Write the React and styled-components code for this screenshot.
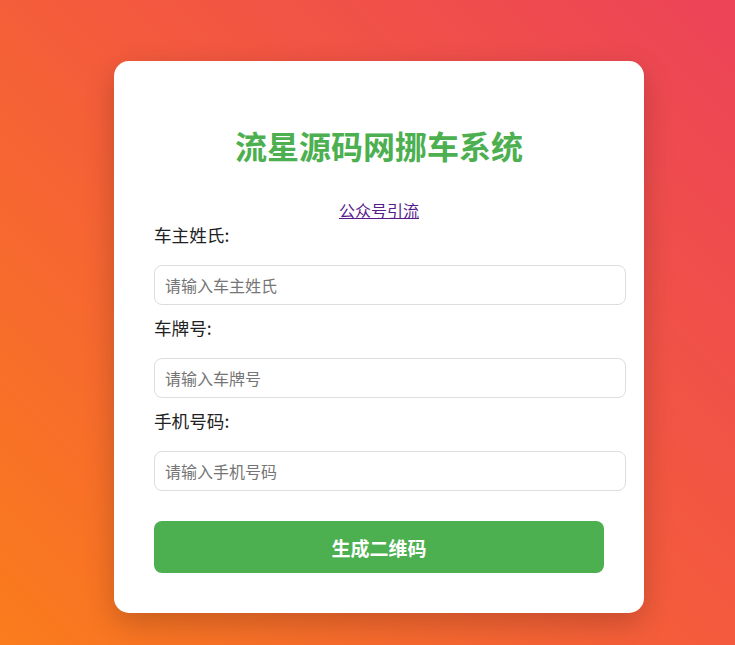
import React from "react";
import styled, { createGlobalStyle } from "styled-components";

const GlobalStyle = createGlobalStyle`
  html, body {
    margin: 0;
    padding: 0;
    height: 100%;
  }
  body {
    font-family: "Noto Sans CJK SC", "Noto Sans", sans-serif;
    background: linear-gradient(45deg, #fa7c1c 0%, #f45c3b 50%, #ec4358 100%);
    background-attachment: fixed;
  }
`;

const Page = styled.div`
  min-height: 645px;
  box-sizing: border-box;
  display: flex;
  justify-content: center;
  align-items: flex-start;
  padding: 61px 0 0 23px;
`;

const Card = styled.div`
  width: 450px;
  padding: 40px;
  background: #fff;
  border-radius: 15px;
  box-shadow: 0 10px 30px rgba(0, 0, 0, 0.2);
`;

const Title = styled.h1`
  margin: 21px 0 30px;
  font-size: 32px;
  font-weight: 700;
  color: #4caf50;
  text-align: center;
`;

const LinkRow = styled.div`
  text-align: center;
  font-size: 16px;
`;

const Link = styled.a`
  color: #551a8b;
  text-decoration: underline;
`;

const Label = styled.label`
  display: block;
  font-size: 17.6px;
  color: #222;
  margin-bottom: 18px;
`;

const Input = styled.input`
  display: block;
  width: 100%;
  box-sizing: content-box;
  height: 18px;
  padding: 10px;
  margin: 0 0 10px;
  border: 1px solid #ddd;
  border-radius: 8px;
  font-family: inherit;
  font-size: 16px;
  color: #333;
  outline: none;

  &::placeholder {
    color: #757575;
  }
`;

const Button = styled.button`
  display: block;
  width: 100%;
  height: 52px;
  margin-top: 30px;
  border: none;
  border-radius: 8px;
  background: #4caf50;
  color: #fff;
  font-family: inherit;
  font-size: 19px;
  font-weight: 700;
  cursor: pointer;
`;

const fields = [
  { id: "name", label: "车主姓氏:", placeholder: "请输入车主姓氏" },
  { id: "plate", label: "车牌号:", placeholder: "请输入车牌号" },
  { id: "phone", label: "手机号码:", placeholder: "请输入手机号码" },
];

export default function App() {
  return (
    <>
      <GlobalStyle />
      <Page>
        <Card>
          <Title>流星源码网挪车系统</Title>
          <LinkRow>
            <Link href="#">公众号引流</Link>
          </LinkRow>
          {fields.map((f) => (
            <div key={f.id}>
              <Label htmlFor={f.id}>{f.label}</Label>
              <Input id={f.id} type="text" placeholder={f.placeholder} />
            </div>
          ))}
          <Button type="button">生成二维码</Button>
        </Card>
      </Page>
    </>
  );
}
